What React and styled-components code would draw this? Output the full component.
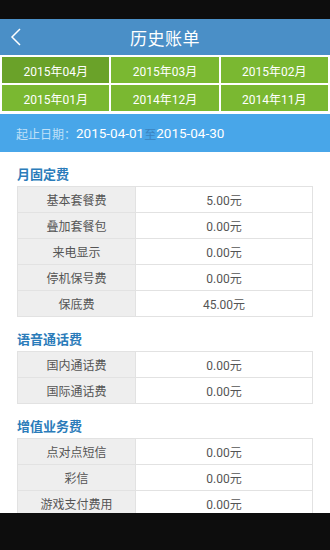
import styled, { createGlobalStyle } from "styled-components";

const Global = createGlobalStyle`
  html, body { margin: 0; padding: 0; background: #ffffff; }
  body { font-family: Roboto, "Noto Sans CJK SC", sans-serif; }
`;

const months = ["2015年04月", "2015年03月", "2015年02月", "2015年01月", "2014年12月", "2014年11月"];

const sections = [
  {
    title: "月固定费",
    rows: [
      ["基本套餐费", "5.00元"],
      ["叠加套餐包", "0.00元"],
      ["来电显示", "0.00元"],
      ["停机保号费", "0.00元"],
      ["保底费", "45.00元"],
    ],
  },
  {
    title: "语音通话费",
    rows: [
      ["国内通话费", "0.00元"],
      ["国际通话费", "0.00元"],
    ],
  },
  {
    title: "增值业务费",
    rows: [
      ["点对点短信", "0.00元"],
      ["彩信", "0.00元"],
      ["游戏支付费用", "0.00元"],
    ],
  },
];

export default function App() {
  return (
    <Screen>
      <Global />
      <StatusBar />
      <Header>
        <Back>
          <svg width="14" height="20" viewBox="0 0 14 20">
            <path d="M11 2 L3 10 L11 18" fill="none" stroke="#fff" strokeWidth="1.5" />
          </svg>
        </Back>
        <Title>历史账单</Title>
      </Header>
      <Content>
        <MonthGrid>
          {months.map((m, i) => (
            <MonthCell key={m} active={i === 0}>{m}</MonthCell>
          ))}
        </MonthGrid>
        <DateBar>
          <DateLabel>起止日期：</DateLabel>
          <DateValue>2015-04-01</DateValue>
          <DateTo>至</DateTo>
          <DateValue>2015-04-30</DateValue>
        </DateBar>
        {sections.map((s) => (
          <Section key={s.title}>
            <SectionTitle>{s.title}</SectionTitle>
            <Table>
              {s.rows.map(([label, value]) => (
                <Row key={label}>
                  <Label>{label}</Label>
                  <Value>{value}</Value>
                </Row>
              ))}
            </Table>
          </Section>
        ))}
      </Content>
      <NavBar />
    </Screen>
  );
}

const Screen = styled.div`
  width: 330px;
  height: 550px;
  display: flex;
  flex-direction: column;
  overflow: hidden;
`;

const StatusBar = styled.div`
  height: 19px;
  background: #0d0d0d;
  flex-shrink: 0;
`;

const Header = styled.header`
  height: 36px;
  flex-shrink: 0;
  background: #4a8fc7;
  display: flex;
  align-items: center;
  justify-content: center;
  position: relative;
`;

const Back = styled.div`
  position: absolute;
  left: 9px;
  top: 8px;
  display: flex;
`;

const Title = styled.h1`
  margin: 0;
  color: #fff;
  font-family: "Noto Sans CJK SC", sans-serif;
  font-weight: 400;
  font-size: 17px;
  letter-spacing: 0.5px;
`;

const Content = styled.main`
  flex: 1;
  overflow: hidden;
`;

const MonthGrid = styled.div`
  display: grid;
  grid-template-columns: repeat(3, 1fr);
  grid-auto-rows: 26px;
  gap: 2px;
  padding: 2px 2px 3px;
  background: #fff;
`;

const MonthCell = styled.div`
  background: ${(p) => (p.active ? "#6aa229" : "#7ab831")};
  color: #fff;
  font-size: 12px;
  display: flex;
  align-items: center;
  justify-content: center;
`;

const DateBar = styled.div`
  height: 38px;
  background: #48a6e9;
  display: flex;
  align-items: center;
  padding-left: 16px;
  font-size: 13px;
`;

const DateLabel = styled.span`
  color: #bfe0f8;
  font-family: "Noto Sans CJK SC", sans-serif;
  font-size: 12px;
`;

const DateValue = styled.span`
  color: #fff;
  font-size: 13.5px;
`;

const DateTo = styled.span`
  color: #3b83bf;
  font-size: 12px;
`;

const Section = styled.section`
  padding: 0 17px;
`;

const SectionTitle = styled.h2`
  margin: 0;
  padding: 14px 0 4px;
  line-height: 16px;
  font-size: 13px;
  font-weight: 700;
  color: #2b7cba;
  font-family: "Noto Sans CJK SC", sans-serif;
`;

const Table = styled.div`
  border: 1px solid #e2e2e2;
  border-bottom: none;
`;

const Row = styled.div`
  display: flex;
  height: 25px;
  border-bottom: 1px solid #e2e2e2;
  font-size: 12px;
  color: #555;
`;

const Label = styled.div`
  width: 117px;
  background: #eeeeee;
  border-right: 1px solid #e2e2e2;
  display: flex;
  align-items: center;
  justify-content: center;
  font-family: "Noto Sans CJK SC", sans-serif;
`;

const Value = styled.div`
  flex: 1;
  display: flex;
  align-items: center;
  justify-content: center;
`;

const NavBar = styled.div`
  height: 37px;
  flex-shrink: 0;
  background: #0d0d0d;
`;
